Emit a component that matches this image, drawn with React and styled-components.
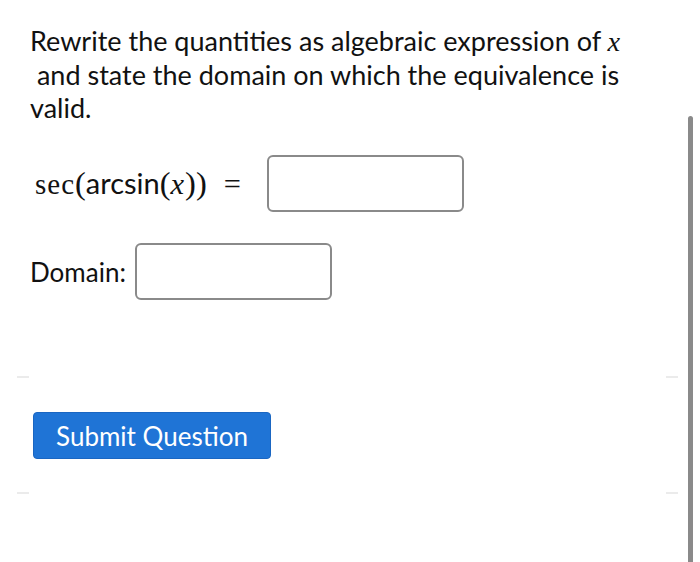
import React from "react";
import styled, { createGlobalStyle } from "styled-components";

const Global = createGlobalStyle`
  html, body { margin: 0; padding: 0; background: #fff; }
  body { font-family: Lato, "Open Sans", sans-serif; color: #111; overflow: hidden; }
`;

const Page = styled.div`
  position: relative;
  width: 700px;
  height: 562px;
  box-sizing: border-box;
  padding: 24px 30px 0 30px;
`;

const Prompt = styled.p`
  margin: 0;
  font-size: 27px;
  line-height: 33px;
  width: 615px;
  white-space: pre-wrap;
`;

const MathVar = styled.span`
  font-family: "Liberation Serif", "DejaVu Serif", serif;
  font-style: italic;
  font-size: 1.05em;
  padding-right: 1px;
`;

const MathSerif = styled.span`
  font-family: "Liberation Serif", "DejaVu Serif", serif;
  letter-spacing: 1px;
`;

const Paren = styled.span`
  font-family: "Liberation Serif", "DejaVu Serif", serif;
  font-size: 1.12em;
`;

const Equals = styled.span`
  font-family: "Liberation Serif", "DejaVu Serif", serif;
  margin-left: 17px;
  font-size: 1.05em;
`;

const Row = styled.div`
  display: flex;
  align-items: center;
  margin-top: ${(p) => p.$mt}px;
  padding-left: ${(p) => p.$pl || 0}px;
  gap: ${(p) => p.$gap}px;
`;

const MathExpr = styled.span`
  font-size: 29px;
  white-space: nowrap;
`;

const Label = styled.span`
  font-size: 26px;
`;

const Field = styled.div`
  width: 197px;
  height: 57px;
  box-sizing: border-box;
  border: 2px solid #8a8a8a;
  border-radius: 6px;
  background: #fff;
`;

const Rule = styled.div`
  display: flex;
  justify-content: space-between;
  margin: ${(p) => p.$m};
`;

const RuleEnd = styled.span`
  display: block;
  width: 12px;
  height: 2px;
  background: #ebebeb;
`;

const RuleWrap = styled.div`
  margin-left: -13px;
  margin-right: -8px;
`;

const Button = styled.button`
  display: block;
  margin: 34px 0 0 16px;
  width: 238px;
  height: 47px;
  border: 1px solid #1a66c2;
  border-radius: 4px;
  background: #1f74d6;
  color: #fff;
  font-family: Lato, "Open Sans", sans-serif;
  font-size: 26px;
  padding: 0;
`;

const Scrollbar = styled.div`
  position: absolute;
  right: 7px;
  top: 116px;
  width: 5px;
  bottom: 0;
  background: #8a8a8a;
  border-radius: 3px 3px 0 0;
`;

export default function App() {
  return (
    <>
      <Global />
      <Page>
        <Prompt>
          Rewrite the quantities as algebraic expression of <MathVar>x</MathVar>
          {"\n"} and state the domain on which the equivalence is valid.
        </Prompt>
        <Row $mt={31} $pl={5} $gap={26}>
          <MathExpr>
            <MathSerif>sec</MathSerif>
            <Paren>(</Paren>arcsin<Paren>(</Paren>
            <MathVar>x</MathVar>
            <Paren>))</Paren>
            <Equals>=</Equals>
          </MathExpr>
          <Field />
        </Row>
        <Row $mt={31} $gap={9}>
          <Label>Domain:</Label>
          <Field />
        </Row>
        <RuleWrap>
          <Rule $m="76px 0 0 0">
            <RuleEnd />
            <RuleEnd />
          </Rule>
          <Button>Submit Question</Button>
          <Rule $m="33px 0 0 0">
            <RuleEnd />
            <RuleEnd />
          </Rule>
        </RuleWrap>
        <Scrollbar />
      </Page>
    </>
  );
}
